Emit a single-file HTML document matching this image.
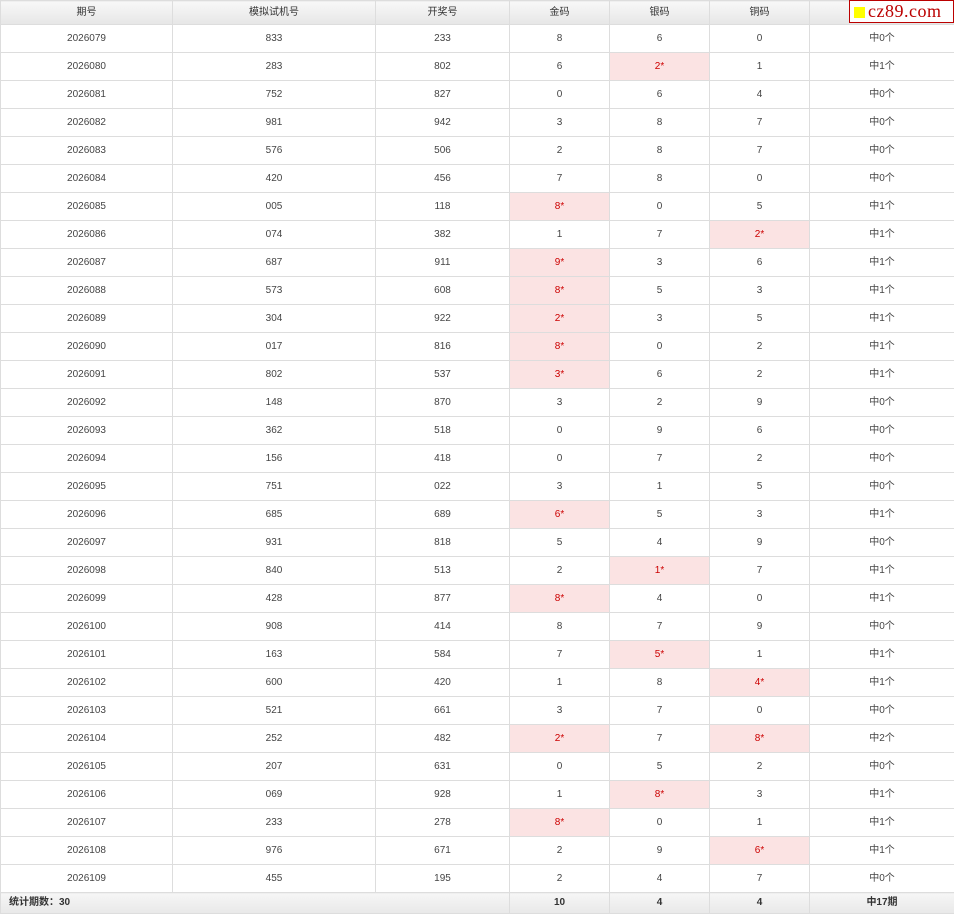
<!DOCTYPE html>
<html><head><meta charset="utf-8"><style>
body{margin:0;background:#fff;font-family:"Liberation Sans","Noto Sans CJK SC",sans-serif;font-size:10px;color:#444}
table{border-collapse:collapse;table-layout:fixed;width:954px;position:absolute;left:0;top:0}
td,th{border:1px solid #ddd;text-align:center;padding:0;height:27px;line-height:12px;font-weight:normal;vertical-align:middle;overflow:hidden}
th{height:23px;background:linear-gradient(#f8f8f8,#e6e6e6);font-size:10px;color:#333}
tr.f td{height:20px;background:linear-gradient(#f6f6f6,#e8e8e8);font-weight:bold;color:#333}
td.h{background:#fbe3e3;color:#c00}
#logo{position:absolute;left:849px;top:0;width:103px;height:21px;border:1px solid #b00;background:#fff;color:#b00;font-family:"Liberation Serif",serif;font-size:18px;line-height:21px;letter-spacing:0.5px}
#logo i{display:inline-block;width:11px;height:11px;background:#ff0;margin:0 3px 0 4px;vertical-align:-1px}
</style></head><body>
<table>
<colgroup><col style="width:172px"><col style="width:203px"><col style="width:134px"><col style="width:100px"><col style="width:100px"><col style="width:100px"><col style="width:145px"></colgroup>
<tr><th>期号</th><th>模拟试机号</th><th>开奖号</th><th>金码</th><th>银码</th><th>铜码</th><th>&nbsp;</th></tr>
<tr><td>2026079</td><td>833</td><td>233</td><td>8</td><td>6</td><td>0</td><td>中0个</td></tr>
<tr><td>2026080</td><td>283</td><td>802</td><td>6</td><td class="h">2*</td><td>1</td><td>中1个</td></tr>
<tr><td>2026081</td><td>752</td><td>827</td><td>0</td><td>6</td><td>4</td><td>中0个</td></tr>
<tr><td>2026082</td><td>981</td><td>942</td><td>3</td><td>8</td><td>7</td><td>中0个</td></tr>
<tr><td>2026083</td><td>576</td><td>506</td><td>2</td><td>8</td><td>7</td><td>中0个</td></tr>
<tr><td>2026084</td><td>420</td><td>456</td><td>7</td><td>8</td><td>0</td><td>中0个</td></tr>
<tr><td>2026085</td><td>005</td><td>118</td><td class="h">8*</td><td>0</td><td>5</td><td>中1个</td></tr>
<tr><td>2026086</td><td>074</td><td>382</td><td>1</td><td>7</td><td class="h">2*</td><td>中1个</td></tr>
<tr><td>2026087</td><td>687</td><td>911</td><td class="h">9*</td><td>3</td><td>6</td><td>中1个</td></tr>
<tr><td>2026088</td><td>573</td><td>608</td><td class="h">8*</td><td>5</td><td>3</td><td>中1个</td></tr>
<tr><td>2026089</td><td>304</td><td>922</td><td class="h">2*</td><td>3</td><td>5</td><td>中1个</td></tr>
<tr><td>2026090</td><td>017</td><td>816</td><td class="h">8*</td><td>0</td><td>2</td><td>中1个</td></tr>
<tr><td>2026091</td><td>802</td><td>537</td><td class="h">3*</td><td>6</td><td>2</td><td>中1个</td></tr>
<tr><td>2026092</td><td>148</td><td>870</td><td>3</td><td>2</td><td>9</td><td>中0个</td></tr>
<tr><td>2026093</td><td>362</td><td>518</td><td>0</td><td>9</td><td>6</td><td>中0个</td></tr>
<tr><td>2026094</td><td>156</td><td>418</td><td>0</td><td>7</td><td>2</td><td>中0个</td></tr>
<tr><td>2026095</td><td>751</td><td>022</td><td>3</td><td>1</td><td>5</td><td>中0个</td></tr>
<tr><td>2026096</td><td>685</td><td>689</td><td class="h">6*</td><td>5</td><td>3</td><td>中1个</td></tr>
<tr><td>2026097</td><td>931</td><td>818</td><td>5</td><td>4</td><td>9</td><td>中0个</td></tr>
<tr><td>2026098</td><td>840</td><td>513</td><td>2</td><td class="h">1*</td><td>7</td><td>中1个</td></tr>
<tr><td>2026099</td><td>428</td><td>877</td><td class="h">8*</td><td>4</td><td>0</td><td>中1个</td></tr>
<tr><td>2026100</td><td>908</td><td>414</td><td>8</td><td>7</td><td>9</td><td>中0个</td></tr>
<tr><td>2026101</td><td>163</td><td>584</td><td>7</td><td class="h">5*</td><td>1</td><td>中1个</td></tr>
<tr><td>2026102</td><td>600</td><td>420</td><td>1</td><td>8</td><td class="h">4*</td><td>中1个</td></tr>
<tr><td>2026103</td><td>521</td><td>661</td><td>3</td><td>7</td><td>0</td><td>中0个</td></tr>
<tr><td>2026104</td><td>252</td><td>482</td><td class="h">2*</td><td>7</td><td class="h">8*</td><td>中2个</td></tr>
<tr><td>2026105</td><td>207</td><td>631</td><td>0</td><td>5</td><td>2</td><td>中0个</td></tr>
<tr><td>2026106</td><td>069</td><td>928</td><td>1</td><td class="h">8*</td><td>3</td><td>中1个</td></tr>
<tr><td>2026107</td><td>233</td><td>278</td><td class="h">8*</td><td>0</td><td>1</td><td>中1个</td></tr>
<tr><td>2026108</td><td>976</td><td>671</td><td>2</td><td>9</td><td class="h">6*</td><td>中1个</td></tr>
<tr><td>2026109</td><td>455</td><td>195</td><td>2</td><td>4</td><td>7</td><td>中0个</td></tr>
<tr class="f"><td colspan="3" style="text-align:left;padding-left:8px">统计期数：30</td><td>10</td><td>4</td><td>4</td><td>中17期</td></tr>
</table>
<div id="logo"><i></i>cz89.com</div>
</body></html>
